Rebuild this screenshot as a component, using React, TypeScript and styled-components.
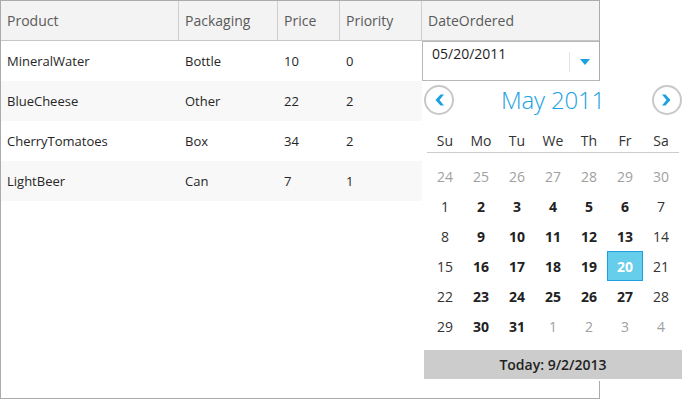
import React from 'react';
import styled, { createGlobalStyle, css } from 'styled-components';

const GlobalStyle = createGlobalStyle`
    html, body {
        margin: 0;
        padding: 0;
        background: #ffffff;
    }
    body {
        font-family: 'Open Sans', 'Noto Sans', sans-serif;
        color: #222222;
    }
    * {
        box-sizing: border-box;
    }
`;

const columns = '178px 99px 62px 82px 1fr';

const Page = styled.div`
    position: relative;
    width: 684px;
    height: 400px;
    overflow: hidden;
`;

const Grid = styled.div`
    width: 600px;
    height: 399px;
    border: 1px solid #ababab;
    display: flex;
    flex-direction: column;
`;

const HeaderRow = styled.div`
    display: grid;
    grid-template-columns: ${columns};
    height: 40px;
    background: #f3f3f3;
    border-bottom: 1px solid #c6c6c6;
`;

const HeaderCell = styled.div`
    display: flex;
    align-items: center;
    padding-left: 6px;
    font-size: 14px;
    color: #5a5a5a;
    border-right: 1px solid #cfcfcf;

    &:last-child {
        border-right: none;
    }
`;

const Row = styled.div<{ $alt: boolean }>`
    display: grid;
    grid-template-columns: ${columns};
    height: 40px;
    background: ${({ $alt }) => ($alt ? '#f8f8f8' : '#ffffff')};
`;

const Cell = styled.div`
    display: flex;
    align-items: center;
    padding-left: 6px;
    font-size: 13px;
    color: #262626;
`;

const DateEditor = styled.div`
    position: relative;
    display: flex;
    align-items: flex-start;
    border: 1px solid #b8b8b8;
    border-right: none;
    background: #ffffff;
    padding: 2px 0 0 9px;
    font-size: 14px;
    color: #1e1e1e;
`;

const EditorText = styled.span`
    flex: 1;
`;

const DropButton = styled.div`
    display: flex;
    align-items: center;
    justify-content: center;
    width: 30px;
    height: 20px;
    margin-top: 8px;
    border-left: 1px solid #e2e2e2;
`;

const Popup = styled.div`
    position: absolute;
    left: 422px;
    top: 81px;
    width: 262px;
    height: 300px;
    background: #ffffff;
    display: flex;
    flex-direction: column;
`;

const MonthHeader = styled.div`
    display: flex;
    align-items: center;
    justify-content: space-between;
    height: 38px;
    padding: 0 2px;
`;

const NavButton = styled.div`
    width: 30px;
    height: 30px;
    border-radius: 50%;
    border: 2px solid #c8c8c8;
    display: flex;
    align-items: center;
    justify-content: center;
`;

const MonthTitle = styled.div`
    font-size: 24px;
    font-weight: 300;
    color: #1ba1e2;
    letter-spacing: -0.2px;
    margin-top: -2px;
`;

const DayNames = styled.div`
    display: grid;
    grid-template-columns: repeat(7, 36px);
    margin: 8px 5px 0 5px;
    height: 26px;
    border-bottom: 1px solid #cccccc;
`;

const DayName = styled.div`
    display: flex;
    align-items: center;
    justify-content: center;
    font-size: 14px;
    color: #333333;
    padding-top: 2px;
`;

const Days = styled.div`
    display: grid;
    grid-template-columns: repeat(7, 36px);
    grid-auto-rows: 30px;
    margin: 8px 5px 0 5px;
`;

type DayKind = 'other' | 'weekend' | 'weekday';

const Day = styled.div<{ $kind: DayKind; $selected: boolean }>`
    display: flex;
    align-items: center;
    justify-content: center;
    font-size: 14px;
    border: 1px solid transparent;
    ${({ $kind }) =>
        $kind === 'other'
            ? css`
                  color: #a0a0a0;
              `
            : $kind === 'weekend'
            ? css`
                  color: #333333;
              `
            : css`
                  color: #222222;
                  font-weight: 700;
              `}
    ${({ $selected }) =>
        $selected &&
        css`
            background: #66cdea;
            border-color: #1ba1e2;
            color: #ffffff;
        `}
`;

const TodayBar = styled.div`
    margin: 9px 2px 0 2px;
    height: 29px;
    background: #cccccc;
    display: flex;
    align-items: center;
    justify-content: center;
    font-size: 14px;
    font-weight: 600;
    color: #222222;
`;

const products = [
    { name: 'MineralWater', pack: 'Bottle', price: 10, priority: 0 },
    { name: 'BlueCheese', pack: 'Other', price: 22, priority: 2 },
    { name: 'CherryTomatoes', pack: 'Box', price: 34, priority: 2 },
    { name: 'LightBeer', pack: 'Can', price: 7, priority: 1 },
];

const dayNames = ['Su', 'Mo', 'Tu', 'We', 'Th', 'Fr', 'Sa'];

const buildDays = () => {
    const list: { n: number; kind: DayKind }[] = [];
    for (let n = 24; n <= 30; n++) list.push({ n, kind: 'other' });
    for (let n = 1; n <= 31; n++) {
        const col = list.length % 7;
        list.push({ n, kind: col === 0 || col === 6 ? 'weekend' : 'weekday' });
    }
    for (let n = 1; list.length < 42; n++) list.push({ n, kind: 'other' });
    return list;
};

// chunky arrow head used on the month navigation buttons
const Chevron = ({ dir }: { dir: 'left' | 'right' }) => (
    <svg width="12" height="14" viewBox="0 0 12 14">
        <path
            d={
                dir === 'left'
                    ? 'M7.5 1.5 L11 1.5 L6.5 7 L11 12.5 L7.5 12.5 L2.5 7 Z'
                    : 'M4.5 1.5 L1 1.5 L5.5 7 L1 12.5 L4.5 12.5 L9.5 7 Z'
            }
            fill="#1ba1e2"
        />
    </svg>
);

export default function App() {
    const days = buildDays();
    return (
        <Page>
            <GlobalStyle />
            <Grid>
                <HeaderRow>
                    <HeaderCell>Product</HeaderCell>
                    <HeaderCell>Packaging</HeaderCell>
                    <HeaderCell>Price</HeaderCell>
                    <HeaderCell>Priority</HeaderCell>
                    <HeaderCell>DateOrdered</HeaderCell>
                </HeaderRow>
                {products.map((p, i) => (
                    <Row key={p.name} $alt={i % 2 === 1}>
                        <Cell>{p.name}</Cell>
                        <Cell>{p.pack}</Cell>
                        <Cell>{p.price}</Cell>
                        <Cell>{p.priority}</Cell>
                        {i === 0 ? (
                            <DateEditor>
                                <EditorText>05/20/2011</EditorText>
                                <DropButton>
                                    <svg width="10" height="6" viewBox="0 0 10 6">
                                        <path d="M0 0 H10 L5 6 Z" fill="#1ba1e2" />
                                    </svg>
                                </DropButton>
                            </DateEditor>
                        ) : (
                            <Cell />
                        )}
                    </Row>
                ))}
            </Grid>
            <Popup>
                <MonthHeader>
                    <NavButton>
                        <Chevron dir="left" />
                    </NavButton>
                    <MonthTitle>May 2011</MonthTitle>
                    <NavButton>
                        <Chevron dir="right" />
                    </NavButton>
                </MonthHeader>
                <DayNames>
                    {dayNames.map((d) => (
                        <DayName key={d}>{d}</DayName>
                    ))}
                </DayNames>
                <Days>
                    {days.map((d, i) => (
                        <Day
                            key={i}
                            $kind={d.kind}
                            $selected={d.kind !== 'other' && d.n === 20}
                        >
                            {d.n}
                        </Day>
                    ))}
                </Days>
                <TodayBar>Today: 9/2/2013</TodayBar>
            </Popup>
        </Page>
    );
}
